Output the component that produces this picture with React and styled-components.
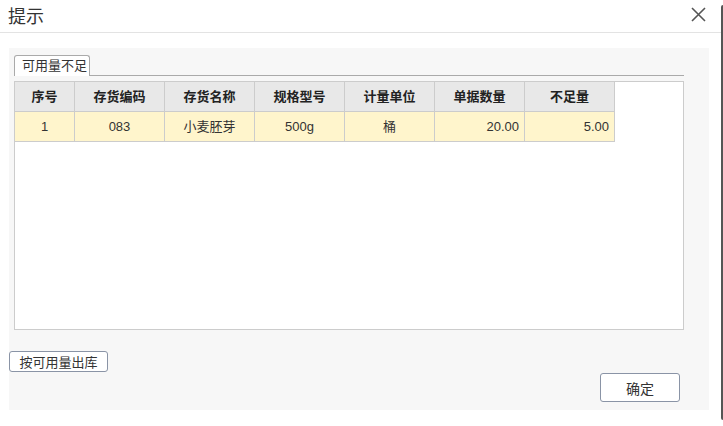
import React from "react";
import styled, { createGlobalStyle } from "styled-components";

const GlobalStyle = createGlobalStyle`
  html, body {
    margin: 0;
    padding: 0;
    background: #fff;
    overflow: hidden;
  }
  body {
    font-family: "Liberation Sans", "Noto Sans CJK SC", sans-serif;
    color: #333;
  }
`;

const columns = [
  { key: "no", title: "序号", width: 60 },
  { key: "code", title: "存货编码", width: 90 },
  { key: "name", title: "存货名称", width: 90 },
  { key: "spec", title: "规格型号", width: 90 },
  { key: "unit", title: "计量单位", width: 90 },
  { key: "qty", title: "单据数量", width: 90, numeric: true },
  { key: "short", title: "不足量", width: 90, numeric: true },
];

const rows = [
  { no: "1", code: "083", name: "小麦胚芽", spec: "500g", unit: "桶", qty: "20.00", short: "5.00" },
];

export default function App() {
  return (
    <>
      <GlobalStyle />
      <Screen>
        <Dialog>
          <TitleBar>
            <Title>提示</Title>
            <CloseButton aria-label="close">
              <svg width="15" height="15" viewBox="0 0 15 15">
                <path d="M1 1 L14 14 M14 1 L1 14" stroke="#555" strokeWidth="1.6" fill="none" />
              </svg>
            </CloseButton>
          </TitleBar>
          <Body>
            <Panel>
              <TabArea>
                <TabStrip>
                  <Tab>可用量不足</Tab>
                </TabStrip>
                <GridBox>
                  <GridRow>
                    {columns.map((c) => (
                      <HeadCell key={c.key} $w={c.width}>
                        {c.title}
                      </HeadCell>
                    ))}
                  </GridRow>
                  {rows.map((r, i) => (
                    <GridRow key={i}>
                      {columns.map((c) => (
                        <DataCell key={c.key} $w={c.width} $numeric={c.numeric}>
                          {r[c.key]}
                        </DataCell>
                      ))}
                    </GridRow>
                  ))}
                </GridBox>
              </TabArea>
              <ActionRow>
                <SmallButton>按可用量出库</SmallButton>
              </ActionRow>
              <Footer>
                <OkButton>确定</OkButton>
              </Footer>
            </Panel>
          </Body>
        </Dialog>
        <Backdrop />
      </Screen>
    </>
  );
}

const Screen = styled.div`
  display: flex;
  height: 426px;
`;

const Dialog = styled.div`
  width: 721px;
  height: 426px;
  background: #fff;
  display: flex;
  flex-direction: column;
`;

const Backdrop = styled.div`
  width: 2px;
  margin: 5px 0 6px;
  background: #555;
  border-radius: 2px 0 0 2px;
`;

const TitleBar = styled.div`
  height: 33px;
  border-bottom: 1px solid #e3e3e3;
  display: flex;
  align-items: center;
  justify-content: space-between;
  padding: 0 15px 0 8px;
  box-sizing: border-box;
`;

const Title = styled.div`
  font-size: 18px;
  color: #333;
  font-family: "Noto Sans CJK SC", sans-serif;
  line-height: 1;
  margin-top: -2px;
`;

const CloseButton = styled.div`
  width: 15px;
  height: 15px;
  display: flex;
  margin-top: -4px;
`;

const Body = styled.div`
  padding: 15px 12px 0 9px;
`;

const Panel = styled.div`
  width: 700px;
  height: 362px;
  background: #f7f7f7;
  display: flex;
  flex-direction: column;
`;

const TabArea = styled.div`
  padding: 7px 25px 0 5px;
`;

const TabStrip = styled.div`
  height: 20px;
  border-bottom: 1px solid #aaa;
  display: flex;
  align-items: flex-end;
  margin-bottom: 5px;
`;

const Tab = styled.div`
  width: 76px;
  height: 21px;
  box-sizing: border-box;
  border: 1px solid #aaa;
  border-bottom: none;
  border-radius: 3px 3px 0 0;
  background: #fff;
  font-size: 13px;
  color: #333;
  line-height: 19px;
  padding-left: 7px;
  margin-bottom: -1px;
`;

const GridBox = styled.div`
  height: 249px;
  box-sizing: border-box;
  border: 1px solid #ccc;
  background: #fff;
`;

const GridRow = styled.div`
  display: flex;
`;

const Cell = styled.div`
  width: ${(p) => p.$w}px;
  height: 30px;
  box-sizing: border-box;
  border-right: 1px solid #ccc;
  border-bottom: 1px solid #ccc;
  font-size: 13px;
  line-height: 29px;
  white-space: nowrap;
`;

const HeadCell = styled(Cell)`
  background: #e8e8e8;
  font-weight: bold;
  color: #222;
  text-align: center;
`;

const DataCell = styled(Cell)`
  background: #fff5cc;
  color: #333;
  text-align: ${(p) => (p.$numeric ? "right" : "center")};
  padding-right: ${(p) => (p.$numeric ? "5px" : "0")};
`;

const ActionRow = styled.div`
  margin-top: 21px;
  display: flex;
`;

const SmallButton = styled.button`
  width: 99px;
  height: 21px;
  padding: 0;
  border: 1px solid #8a94a6;
  border-radius: 3px;
  background: #fff;
  font-family: "Liberation Sans", "Noto Sans CJK SC", sans-serif;
  font-size: 13px;
  color: #333;
`;

const Footer = styled.div`
  display: flex;
  justify-content: flex-end;
  padding-right: 29px;
  margin-top: 1px;
`;

const OkButton = styled.button`
  width: 80px;
  height: 29px;
  padding: 0;
  border: 1px solid #8a94a6;
  border-radius: 3px;
  background: #fff;
  font-family: "Liberation Sans", "Noto Sans CJK SC", sans-serif;
  font-size: 14px;
  color: #333;
`;
